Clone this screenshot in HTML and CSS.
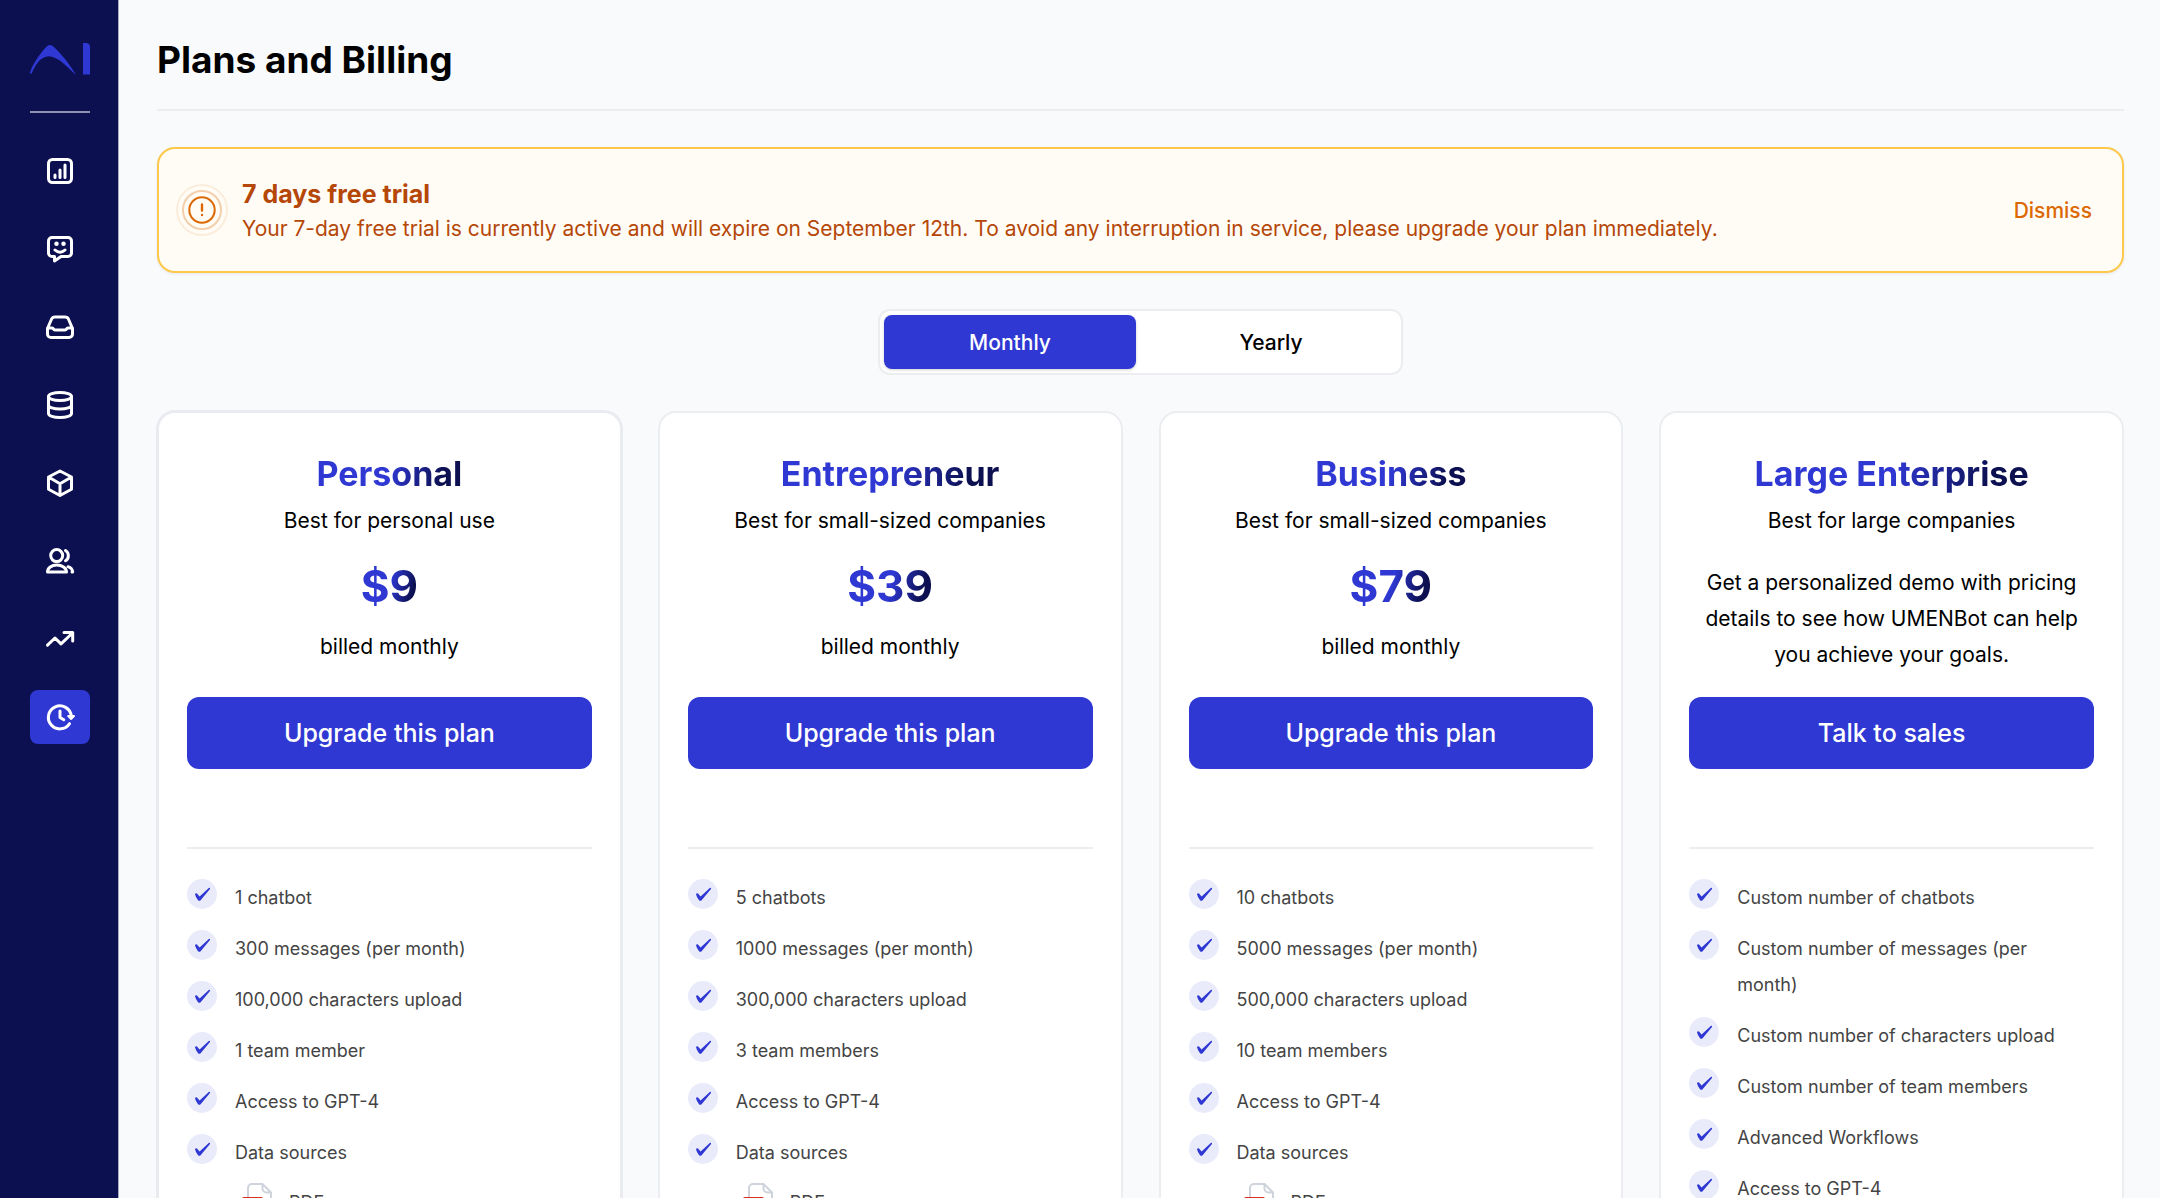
FILE: index.html
```html
<!DOCTYPE html>
<html lang="en">
<head>
<meta charset="utf-8">
<title>Plans and Billing</title>
<link rel="stylesheet" href="styles.css">
</head>
<body>
<svg class="sprite" aria-hidden="true">
  <symbol id="check" viewBox="0 0 30 30"><path d="M8 15.2Q8.6 13.8 10 14.6L12.6 17.6 21.8 9Q23.4 8.4 23 10L13.6 21.3Q12.4 22.4 11 21.2Q8.8 18.6 8 15.2z" fill="#2f38d3"/></symbol>
  <symbol id="pdf" viewBox="0 0 36 36"><path d="M11 33h15a4 4 0 0 0 4-4V10.5L21.5 2H11a4 4 0 0 0-4 4v23a4 4 0 0 0 4 4zM21.5 2v4.5a4 4 0 0 0 4 4H30" fill="#fff" stroke="#cfd4dc" stroke-width="2"/><rect x="1" y="15" width="21" height="13" rx="2" fill="#d92d20"/></symbol>
</svg>
<div class="app">
  <aside class="sidebar">
    <a class="logo" href="#" aria-label="Home"><svg width="60" height="32" viewBox="0 0 60 32" fill="#2f38d3"><path d="M0 29.5C3 20 12 8 17.5 2.8Q20 .8 23 3.2C32 11 40 22 46 31.7C38 25.5 29 13.5 19 13.2C10 13.5 5.5 22 1.5 30.5L0 30.8z"/><path d="M53 0h3q4 .3 4 4v27.5h-7z"/></svg></a>
    <nav class="nav" aria-label="Main">
      <a href="#" aria-label="Analytics"><svg class="icon" viewBox="0 0 36 36"><rect x="6.5" y="6.5" width="23" height="23" rx="4"/><path d="M13 22v2.5M18 17v7.5M23 12v12.5"/></svg></a>
      <a href="#" aria-label="Chatbots"><svg class="icon" viewBox="0 0 36 36"><path d="M10 6.500h16a3.500 3.500 0 0 1 3.500 3.500v12a3.500 3.500 0 0 1-3.500 3.500h-7L12.500 30v-4.500H10A3.500 3.500 0 0 1 6.500 22V10A3.500 3.500 0 0 1 10 6.500z"/><path d="M13 19q5 4.500 10 0"/><path d="M14.500 12.700v.01M21.500 12.700v.01" stroke-width="4.500"/></svg></a>
      <a href="#" aria-label="Inbox"><svg class="icon" viewBox="0 0 36 36"><path d="M5.500 19.500 9.600 10Q10.500 8 13 8h10q2.500 0 3.400 2l4.100 9.500V25a3.500 3.500 0 0 1-3.500 3.500H9A3.500 3.500 0 0 1 5.500 25zM5.500 19h4.500q1 0 1.500 1t1.500 1h10q1 0 1.500-1t1.500-1h4.500"/></svg></a>
      <a href="#" aria-label="Data"><svg class="icon" viewBox="0 0 36 36"><ellipse cx="18" cy="9.500" rx="11.500" ry="4"/><path d="M6.500 9.500v17c0 2.200 5 4 11.500 4s11.500-1.800 11.500-4v-17M6.500 18c0 2.200 5 4 11.500 4s11.500-1.800 11.500-4"/></svg></a>
      <a href="#" aria-label="Integrations"><svg class="icon" viewBox="0 0 36 36"><path d="M18 6l11.500 6v12.300L18 30.500 6.500 24.300V12zM6.500 12 18 18.700 29.500 12M18 18.700v11.800"/></svg></a>
      <a href="#" aria-label="Team"><svg class="icon" viewBox="0 0 36 36"><circle cx="14.700" cy="12.600" r="6"/><path d="M5.500 29c0-4 4.200-7 9.300-7s9.700 3 9.700 7zM23.500 7.500c3.800 2.300 3.800 8 0 10.200M26 23.700c2.800 1 4.500 3 4.700 5.300H30"/></svg></a>
      <a href="#" aria-label="Growth"><svg class="icon" viewBox="0 0 36 36"><path d="M5.500 24.200 13 17l6 5.800L30.500 12M22 11.500h8.700V20"/></svg></a>
      <a class="active" href="#" aria-label="Plans and billing" aria-current="page"><svg class="icon" viewBox="0 0 36 36"><path d="M29.300 17A11.500 11.500 0 1 0 27.500 24.700M18 12v6.500l3.800 2.300"/><path d="M26.200 17h5.800L29.100 20z" fill="#fff" stroke-width="2"/></svg></a>
    </nav>
  </aside>
  <main class="main">
    <header class="page-head"><h1>Plans and Billing</h1></header>
    <section class="alert">
      <svg class="alert-icon" width="52" height="52" viewBox="0 0 52 52" fill="none" stroke="#dc6803" stroke-width="2"><circle cx="26" cy="26" r="25" opacity=".1"/><circle cx="26" cy="26" r="19" opacity=".3"/><circle cx="26" cy="26" r="12.700"/><path d="M26 20.500v6M26 31v.01" stroke-linecap="round" stroke-width="2.400"/></svg>
      <div class="alert-text">
        <h2>7 days free trial</h2>
        <p>Your 7-day free trial is currently active and will expire on September 12th. To avoid any interruption in service, please upgrade your plan immediately.</p>
      </div>
      <button class="dismiss" type="button">Dismiss</button>
    </section>
    <div class="toggle" role="group" aria-label="Billing period">
      <button class="selected" type="button" aria-pressed="true">Monthly</button>
      <button type="button" aria-pressed="false">Yearly</button>
    </div>
    <div class="plans">
      <section class="plan current">
        <div class="offer">
          <h2 class="gradient name">Personal</h2>
          <p>Best for personal use</p>
          <p class="gradient price">$9</p>
          <p class="billed">billed monthly</p>
        </div>
        <button class="cta" type="button">Upgrade this plan</button>
        <ul class="features">
          <li><svg class="tick"><use href="#check"/></svg><span>1 chatbot</span></li>
          <li><svg class="tick"><use href="#check"/></svg><span>300 messages (per month)</span></li>
          <li><svg class="tick"><use href="#check"/></svg><span>100,000 characters upload</span></li>
          <li><svg class="tick"><use href="#check"/></svg><span>1 team member</span></li>
          <li><svg class="tick"><use href="#check"/></svg><span>Access to GPT-4</span></li>
          <li><svg class="tick"><use href="#check"/></svg><span>Data sources</span></li>
        </ul>
        <div class="source"><svg class="file"><use href="#pdf"/></svg><span>PDF</span></div>
      </section>
      <section class="plan">
        <div class="offer">
          <h2 class="gradient name">Entrepreneur</h2>
          <p>Best for small-sized companies</p>
          <p class="gradient price">$39</p>
          <p class="billed">billed monthly</p>
        </div>
        <button class="cta" type="button">Upgrade this plan</button>
        <ul class="features">
          <li><svg class="tick"><use href="#check"/></svg><span>5 chatbots</span></li>
          <li><svg class="tick"><use href="#check"/></svg><span>1000 messages (per month)</span></li>
          <li><svg class="tick"><use href="#check"/></svg><span>300,000 characters upload</span></li>
          <li><svg class="tick"><use href="#check"/></svg><span>3 team members</span></li>
          <li><svg class="tick"><use href="#check"/></svg><span>Access to GPT-4</span></li>
          <li><svg class="tick"><use href="#check"/></svg><span>Data sources</span></li>
        </ul>
        <div class="source"><svg class="file"><use href="#pdf"/></svg><span>PDF</span></div>
      </section>
      <section class="plan">
        <div class="offer">
          <h2 class="gradient name">Business</h2>
          <p>Best for small-sized companies</p>
          <p class="gradient price">$79</p>
          <p class="billed">billed monthly</p>
        </div>
        <button class="cta" type="button">Upgrade this plan</button>
        <ul class="features">
          <li><svg class="tick"><use href="#check"/></svg><span>10 chatbots</span></li>
          <li><svg class="tick"><use href="#check"/></svg><span>5000 messages (per month)</span></li>
          <li><svg class="tick"><use href="#check"/></svg><span>500,000 characters upload</span></li>
          <li><svg class="tick"><use href="#check"/></svg><span>10 team members</span></li>
          <li><svg class="tick"><use href="#check"/></svg><span>Access to GPT-4</span></li>
          <li><svg class="tick"><use href="#check"/></svg><span>Data sources</span></li>
        </ul>
        <div class="source"><svg class="file"><use href="#pdf"/></svg><span>PDF</span></div>
      </section>
      <section class="plan">
        <div class="offer">
          <h2 class="gradient name">Large Enterprise</h2>
          <p>Best for large companies</p>
          <p class="pitch">Get a personalized demo with pricing details to see how UMENBot can help you achieve your goals.</p>
        </div>
        <button class="cta" type="button">Talk to sales</button>
        <ul class="features">
          <li><svg class="tick"><use href="#check"/></svg><span>Custom number of chatbots</span></li>
          <li><svg class="tick"><use href="#check"/></svg><span>Custom number of messages (per month)</span></li>
          <li><svg class="tick"><use href="#check"/></svg><span>Custom number of characters upload</span></li>
          <li><svg class="tick"><use href="#check"/></svg><span>Custom number of team members</span></li>
          <li><svg class="tick"><use href="#check"/></svg><span>Advanced Workflows</span></li>
          <li><svg class="tick"><use href="#check"/></svg><span>Access to GPT-4</span></li>
        </ul>
      </section>
    </div>
  </main>
</div>
</body>
</html>
```
FILE: styles.css
```css
* { box-sizing: border-box; }
body, h1, h2, p, ul { margin: 0; padding: 0; }
body {
  font-family: Inter, "Liberation Sans", sans-serif;
  font-size: 21px;
  line-height: 36px;
  color: #000;
  background: #f9fafc;
}
button { font-family: inherit; border: 0; cursor: pointer; }
.sprite { display: none; }

.app { display: flex; height: 100vh; }

.sidebar {
  flex: none;
  width: 119px;
  padding: 43px 28px 0 30px;
  background: #0c1050;
  border-right: 1px solid #a9abc4;
}
.logo { display: block; height: 70px; border-bottom: 2px solid #8f91b0; }
.logo svg { display: block; }
.nav { display: flex; flex-direction: column; gap: 24px; margin-top: 31px; }
.nav a {
  display: flex;
  align-items: center;
  justify-content: center;
  height: 54px;
  border-radius: 8px;
}
.nav .active { background: #2f38d3; }
.icon {
  width: 36px;
  height: 36px;
  fill: none;
  stroke: #fff;
  stroke-width: 3;
  stroke-linecap: round;
  stroke-linejoin: round;
}

.main {
  flex: 1;
  min-width: 0;
  padding: 0 36px 36px 38px;
  overflow-y: auto;
  scrollbar-width: none;
}
.page-head { padding: 36px 0 25px; border-bottom: 2px solid #ebedf1; }
h1 { font-size: 37px; line-height: 48px; font-weight: 700; }

.alert {
  display: flex;
  align-items: center;
  gap: 14px;
  min-height: 126px;
  margin-top: 36px;
  padding: 0 30px 0 17px;
  background: #fffcf5;
  border: 2px solid #fec84b;
  border-radius: 18px;
  box-shadow: 0 1px 3px rgba(16, 24, 40, .08);
  color: #b54708;
}
.alert-icon { flex: none; }
.alert-text { flex: 1; padding-top: 4px; }
.alert h2 { font-size: 25px; line-height: 34px; font-weight: 700; }
.dismiss { background: none; padding: 0; font-size: 21px; font-weight: 500; color: #dc6803; }

.toggle {
  display: grid;
  grid-template-columns: 1fr 1fr;
  gap: 9px;
  width: 525px;
  margin: 36px auto 0;
  padding: 4px;
  background: #fff;
  border: 2px solid #ebedf1;
  border-radius: 12px;
}
.toggle button {
  height: 54px;
  border-radius: 8px;
  background: none;
  font-size: 21px;
  font-weight: 500;
}
.toggle .selected { background: #2f38d3; color: #fff; box-shadow: 0 1px 3px rgba(16, 24, 40, .2); }

.plans { display: grid; grid-template-columns: repeat(4, 1fr); gap: 36px; margin-top: 36px; }
.plan {
  display: flex;
  flex-direction: column;
  min-height: 1000px;
  padding: 40px 28px 28px;
  background: #fff;
  border: 2px solid #ebedf1;
  border-radius: 18px;
}
.current { border-color: #e9ebf0; box-shadow: 0 0 0 1px #e9ebf0; }
.offer {
  display: flex;
  flex-direction: column;
  align-items: center;
  min-height: 244px;
  text-align: center;
}
.gradient {
  background: linear-gradient(105deg, #2f38d3 50%, #0c1050 85%);
  background-clip: text;
  color: transparent;
  font-weight: 700;
}
.name { font-size: 34px; line-height: 42px; margin-bottom: 8px; }
.price { font-size: 44px; line-height: 54px; margin: 20px 0 16px; }
.pitch { margin-top: 26px; }
.cta {
  height: 72px;
  border-radius: 12px;
  background: #2f38d3;
  color: #fff;
  font-size: 25px;
  font-weight: 500;
}
.features {
  display: flex;
  flex-direction: column;
  gap: 15px;
  margin-top: 78px;
  padding-top: 30px;
  border-top: 2px solid #ebedf1;
  list-style: none;
}
.features li { display: flex; align-items: flex-start; gap: 18px; padding-right: 30px; font-size: 18px; color: #444; }
.features span { padding-top: 1px; margin-bottom: -1px; }
.tick { flex: none; width: 30px; height: 30px; border-radius: 50%; background: #e9ebfb; }
.source { display: flex; align-items: flex-start; gap: 12px; margin-top: 12px; padding-left: 54px; color: #444; font-size: 18px; }
.source span { padding-top: 3px; }
.file { flex: none; width: 36px; height: 36px; }
```
